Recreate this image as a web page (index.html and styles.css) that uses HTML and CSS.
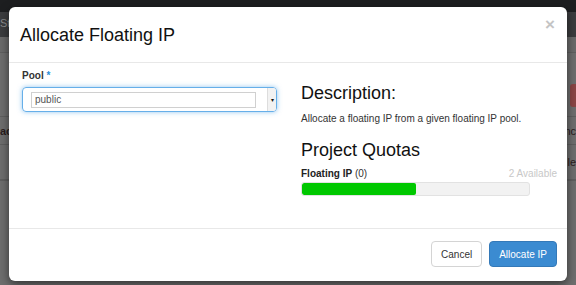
FILE: index.html
```html
<!DOCTYPE html>
<html lang="en">
<head>
    <meta charset="UTF-8">
    <meta name="viewport" content="width=device-width, initial-scale=1.0">
    <link rel="stylesheet" href="styles.css">
    <title>Allocate Floating IP</title>
</head>
<body>
    <div class="page">
        <div class="navbar"></div>
        <div class="subnav"><span>St</span></div>
        <div class="row row-head"></div>
        <div class="row row-tall"><span class="danger-btn"></span></div>
        <div class="row row-mid"><span class="cell-left">ac</span><span class="cell-right">nc</span></div>
        <div class="row row-mid2"><span class="cell-right">le</span></div>
        <div class="row"></div>
    </div>

    <div class="modal">
        <div class="modal-header">
            <h3>Allocate Floating IP</h3>
            <span class="close">&times;</span>
        </div>
        <div class="modal-body">
            <div class="left-col">
                <label class="field-label">Pool <span class="required">*</span></label>
                <div class="select-box">
                    <div class="select-inner">public</div>
                    <div class="select-arrow"><span>&#9662;</span></div>
                </div>
            </div>
            <div class="right-col">
                <h3>Description:</h3>
                <p>Allocate a floating IP from a given floating IP pool.</p>
                <h3 class="quota-title">Project Quotas</h3>
                <div class="quota-label">
                    <span><strong>Floating IP</strong> (0)</span>
                    <span class="available">2 Available</span>
                </div>
                <div class="progress">
                    <div class="progress-bar" style="width: 50%"></div>
                </div>
            </div>
        </div>
        <div class="modal-footer">
            <button class="btn">Cancel</button>
            <button class="btn btn-primary">Allocate IP</button>
        </div>
    </div>
</body>
</html>
```

FILE: styles.css
```css
body {
    margin: 0;
    padding: 0;
    font-family: "Liberation Sans", Arial, sans-serif;
    background-color: #6e6e6e;
    height: 285px;
    overflow: hidden;
}

.page {
    display: flex;
    flex-direction: column;
}

.navbar {
    height: 12px;
    background-color: #1d1e20;
}

.subnav {
    height: 25px;
    background-color: #3b3c3e;
    color: #8c8c8c;
    font-size: 11px;
    line-height: 22px;
}

.subnav span {
    display: inline-block;
    width: 9px;
    overflow: hidden;
}

.row {
    border-bottom: 1px solid #5f5f5f;
    display: flex;
    justify-content: space-between;
    align-items: center;
    font-size: 11px;
    font-weight: bold;
    color: #2a1d1d;
}

.row-head {
    height: 15px;
    background-color: #6a6a6a;
}

.row-tall {
    height: 63px;
    justify-content: flex-end;
    align-items: flex-start;
}

.danger-btn {
    display: block;
    width: 6px;
    height: 23px;
    margin-top: 31px;
    background-color: #8c4646;
    border-radius: 3px 0 0 3px;
}

.row-mid {
    height: 27px;
}

.row-mid2 {
    height: 34px;
    justify-content: flex-end;
}

.cell-right {
    font-weight: normal;
}

.modal {
    position: absolute;
    top: 7px;
    left: 9px;
    width: 558px;
    height: 274px;
    background-color: #fff;
    border-radius: 6px;
    box-shadow: 0 3px 10px rgba(0, 0, 0, 0.55);
    display: flex;
    flex-direction: column;
    color: #222;
}

.modal-header {
    height: 55px;
    border-bottom: 1px solid #e8e8e8;
    display: flex;
    align-items: center;
    justify-content: space-between;
    padding: 0 12px 0 11px;
}

.modal-header h3 {
    margin: 0;
    font-size: 18px;
    font-weight: normal;
    color: #111;
    padding-top: 1px;
}

.close {
    font-size: 17px;
    font-weight: bold;
    color: #c4c4c4;
    margin-top: -20px;
}

.modal-body {
    height: 165px;
    box-sizing: border-box;
    display: flex;
    gap: 24px;
    padding: 0 10px 0 13px;
}

.left-col {
    width: 255px;
    padding-top: 7px;
}

.field-label {
    display: block;
    font-size: 10px;
    font-weight: bold;
    color: #333;
    line-height: 12px;
    margin-bottom: 5px;
}

.required {
    color: #2b8fd6;
}

.select-box {
    height: 25px;
    box-sizing: border-box;
    border: 1px solid #66afe9;
    border-radius: 4px;
    box-shadow: 0 0 5px rgba(102, 175, 233, 0.7);
    display: flex;
    align-items: center;
    padding-left: 8px;
}

.select-inner {
    width: 225px;
    height: 16px;
    box-sizing: border-box;
    border: 1px solid #d0d0d0;
    font-size: 10px;
    line-height: 14px;
    color: #555;
    padding-left: 3px;
}

.select-arrow {
    margin-left: auto;
    width: 9px;
    height: 23px;
    box-sizing: border-box;
    border-left: 1px solid #ddd;
    background-color: #f2f2f2;
    border-radius: 0 3px 3px 0;
    display: flex;
    align-items: center;
    justify-content: center;
    font-size: 6px;
    color: #111;
}

.right-col {
    width: 256px;
    padding-top: 20px;
}

.right-col h3 {
    margin: 0;
    font-size: 18px;
    font-weight: normal;
    line-height: 20px;
    color: #111;
}

.right-col p {
    margin: 10px 0 0 0;
    font-size: 10px;
    line-height: 12px;
    color: #333;
}

.right-col .quota-title {
    margin-top: 15px;
}

.quota-label {
    display: flex;
    justify-content: space-between;
    font-size: 10px;
    line-height: 12px;
    color: #333;
    margin-top: 8px;
}

.quota-label strong {
    color: #222;
}

.available {
    color: #c8c8c8;
}

.progress {
    width: 229px;
    height: 14px;
    box-sizing: border-box;
    margin-top: 2px;
    background-color: #f2f2f2;
    border: 1px solid #e2e2e2;
    border-radius: 3px;
    overflow: hidden;
}

.progress-bar {
    height: 100%;
    background-color: #00c800;
    border-radius: 2px;
}

.modal-footer {
    flex: 1;
    border-top: 1px solid #e8e8e8;
    display: flex;
    justify-content: flex-end;
    align-items: flex-start;
    gap: 7px;
    padding: 12px 10px 0 0;
}

.btn {
    height: 26px;
    padding: 0 9px;
    font-family: "Liberation Sans", Arial, sans-serif;
    font-size: 10px;
    color: #333;
    background-color: #fff;
    border: 1px solid #d4d4d4;
    border-radius: 4px;
    cursor: pointer;
}

.btn-primary {
    color: #fff;
    background-color: #3b8bd1;
    border-color: #3479b8;
}
```
